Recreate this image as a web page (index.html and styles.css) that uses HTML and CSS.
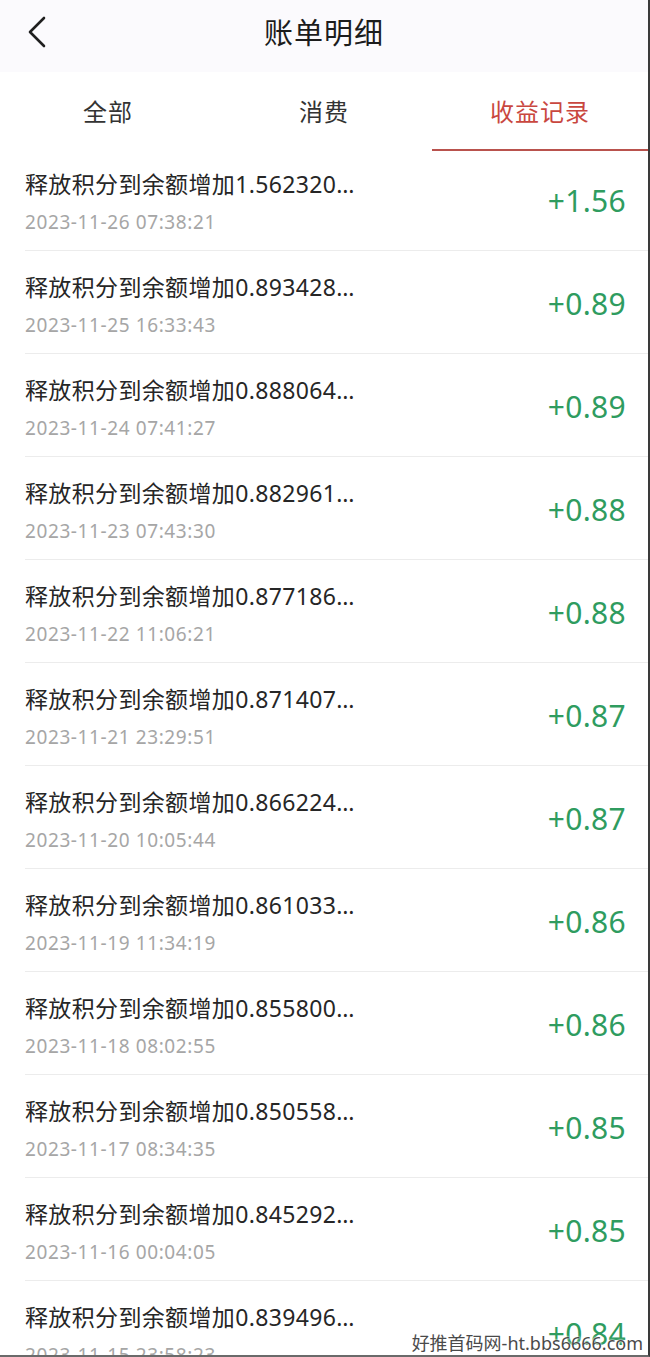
FILE: index.html
```html
<!DOCTYPE html>
<html lang="zh-CN">
<head>
<meta charset="utf-8">
<title>账单明细</title>
<link rel="stylesheet" href="styles.css">
</head>
<body>
<div class="frame">
  <header class="topbar">
    <span class="back">
      <svg width="20" height="32" viewBox="0 0 20 32"><path d="M17 2 L3 16 L17 30" fill="none" stroke="#1f1f1f" stroke-width="2.6" stroke-linecap="round" stroke-linejoin="round"/></svg>
    </span>
    <h1 class="title">账单明细</h1>
  </header>
  <nav class="tabs">
    <div class="tab">全部</div>
    <div class="tab">消费</div>
    <div class="tab active">收益记录</div>
  </nav>
  <ul class="list">
    <li class="row"><div class="info"><div class="desc">释放积分到余额增加1.562320…</div><div class="time">2023-11-26 07:38:21</div></div><div class="amt">+1.56</div></li>
    <li class="row"><div class="info"><div class="desc">释放积分到余额增加0.893428…</div><div class="time">2023-11-25 16:33:43</div></div><div class="amt">+0.89</div></li>
    <li class="row"><div class="info"><div class="desc">释放积分到余额增加0.888064…</div><div class="time">2023-11-24 07:41:27</div></div><div class="amt">+0.89</div></li>
    <li class="row"><div class="info"><div class="desc">释放积分到余额增加0.882961…</div><div class="time">2023-11-23 07:43:30</div></div><div class="amt">+0.88</div></li>
    <li class="row"><div class="info"><div class="desc">释放积分到余额增加0.877186…</div><div class="time">2023-11-22 11:06:21</div></div><div class="amt">+0.88</div></li>
    <li class="row"><div class="info"><div class="desc">释放积分到余额增加0.871407…</div><div class="time">2023-11-21 23:29:51</div></div><div class="amt">+0.87</div></li>
    <li class="row"><div class="info"><div class="desc">释放积分到余额增加0.866224…</div><div class="time">2023-11-20 10:05:44</div></div><div class="amt">+0.87</div></li>
    <li class="row"><div class="info"><div class="desc">释放积分到余额增加0.861033…</div><div class="time">2023-11-19 11:34:19</div></div><div class="amt">+0.86</div></li>
    <li class="row"><div class="info"><div class="desc">释放积分到余额增加0.855800…</div><div class="time">2023-11-18 08:02:55</div></div><div class="amt">+0.86</div></li>
    <li class="row"><div class="info"><div class="desc">释放积分到余额增加0.850558…</div><div class="time">2023-11-17 08:34:35</div></div><div class="amt">+0.85</div></li>
    <li class="row"><div class="info"><div class="desc">释放积分到余额增加0.845292…</div><div class="time">2023-11-16 00:04:05</div></div><div class="amt">+0.85</div></li>
    <li class="row"><div class="info"><div class="desc">释放积分到余额增加0.839496…</div><div class="time">2023-11-15 23:58:23</div></div><div class="amt">+0.84</div></li>
  </ul>
  <div class="watermark">好推首码网-ht.bbs6666.com</div>
</div>
</body>
</html>
```

FILE: styles.css
```css
* { box-sizing: border-box; margin: 0; padding: 0; }
html, body { width: 650px; height: 1357px; overflow: hidden; background: #fff; }
body {
  font-family: "Noto Sans", "Noto Sans CJK SC", sans-serif;
  color: #262626;
}
.frame {
  position: relative;
  width: 650px;
  height: 1357px;
  overflow: hidden;
  border-right: 2px solid #3a3a3a;
  border-bottom: 2px solid #6a6a6a;
  background: #fff;
}
.topbar {
  height: 72px;
  background: #fbfafd;
  display: flex;
  align-items: center;
  justify-content: center;
  position: relative;
}
.back {
  position: absolute;
  left: 27px;
  top: 16px;
  width: 20px;
  height: 32px;
  display: block;
}
.back svg { display: block; }
.title {
  font-size: 29px;
  font-weight: 400;
  color: #1c1c1c;
  line-height: 36px;
  margin-top: -6px;
  letter-spacing: 1px;
}
.tabs {
  display: grid;
  grid-template-columns: 1fr 1fr 1fr;
  height: 79px;
  background: #fff;
}
.tab {
  display: flex;
  align-items: center;
  justify-content: center;
  font-size: 24px;
  color: #333;
  border-bottom: 2px solid transparent;
  letter-spacing: 1px;
}
.tab.active {
  color: #c9473f;
  border-bottom-color: #b9524d;
}
.list { list-style: none; }
.row {
  display: flex;
  align-items: center;
  justify-content: space-between;
  height: 103px;
  margin-left: 25px;
  padding: 21px 22px 15px 0;
  border-bottom: 1px solid #ececec;
}
.row:first-child {
  height: 100px;
  padding-top: 18px;
  padding-bottom: 16px;
}
.info { display: flex; flex-direction: column; }
.desc {
  font-size: 23px;
  line-height: 30px;
  color: #262626;
  white-space: nowrap;
  letter-spacing: 0.35px;
}
.time {
  font-size: 19px;
  line-height: 26px;
  margin-top: 10px;
  color: #a6a6a6;
  white-space: nowrap;
  letter-spacing: 0.6px;
}
.amt {
  font-size: 30px;
  line-height: 36px;
  color: #2f9c5f;
  margin-top: -2px;
  letter-spacing: 0.3px;
}
.watermark {
  position: absolute;
  right: 5px;
  bottom: 1px;
  font-size: 18px;
  line-height: 22px;
  color: #4a4a4a;
  text-shadow: 0 0 2px #fff, 0 0 2px #fff;
}
```
